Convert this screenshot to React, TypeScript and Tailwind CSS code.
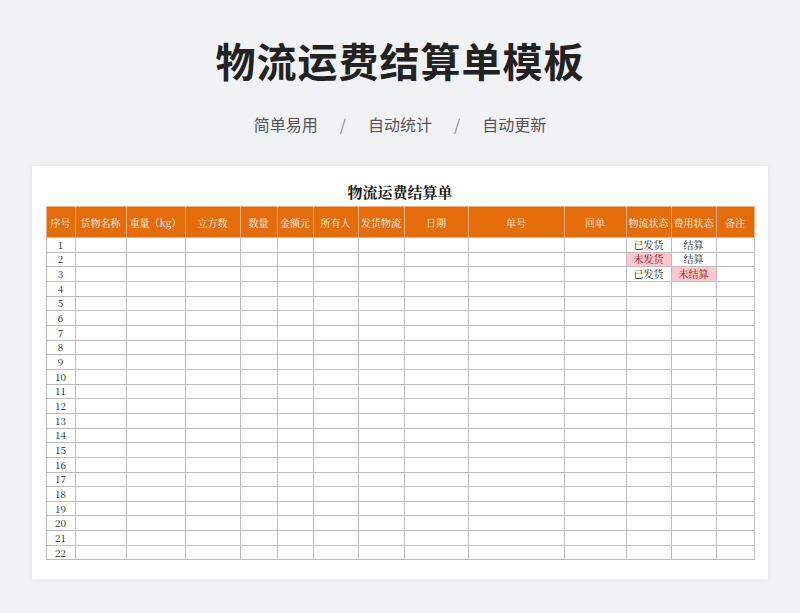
const cols = [
  ["序号", 29], ["货物名称", 51], ["重量（kg）", 59], ["立方数", 55], ["数量", 37], ["金额元", 36],
  ["所有人", 45], ["发货物流", 46], ["日期", 64], ["单号", 96], ["回单", 62], ["物流状态", 45], ["费用状态", 45], ["备注", 38],
] as const;

const status: Record<number, [string, boolean, string, boolean]> = {
  1: ["已发货", false, "结算", false],
  2: ["未发货", true, "结算", false],
  3: ["已发货", false, "未结算", true],
};

export default function App() {
  const rows = Array.from({ length: 22 }, (_, i) => i + 1);
  return (
    <div className="w-[800px] h-[613px] bg-[#f1f2f4] flex flex-col items-center" style={{ fontFamily: '"Noto Sans CJK SC", sans-serif' }}>
      <h1 className="mt-[34px] text-[40px] leading-[52px] font-bold text-[#222] tracking-[1px]">物流运费结算单模板</h1>
      <p className="mt-[26px] text-[16px] leading-[24px] text-[#555] flex gap-[22px]">
        <span>简单易用</span><span className="text-[#888]">/</span><span>自动统计</span><span className="text-[#888]">/</span><span>自动更新</span>
      </p>
      <div className="mt-[30px] w-[736px] h-[413px] bg-white shadow-[0_0_6px_rgba(0,0,0,0.08)] flex flex-col items-center" style={{ fontFamily: '"Noto Serif CJK SC", "Noto Sans CJK SC", serif' }}>
        <div className="mt-[14px] h-[26px] text-[15px] font-bold text-[#111] leading-[24px]">物流运费结算单</div>
        <table className="table-fixed border-collapse text-[10px] text-[#222] w-[708px]">
          <colgroup>{cols.map(([n, w]) => <col key={n} style={{ width: w }} />)}</colgroup>
          <thead>
            <tr className="h-[31px] bg-[#e46c0a] text-white">
              {cols.map(([n]) => (
                <th key={n} className="font-normal border border-[#f4b183] whitespace-nowrap overflow-hidden text-center">{n}</th>
              ))}
            </tr>
          </thead>
          <tbody>
            {rows.map((r) => {
              const s = status[r];
              return (
                <tr key={r} className="h-[14.67px] leading-[12px]">
                  {cols.map(([n], ci) => {
                    let txt = "";
                    let pink = false;
                    if (ci === 0) txt = String(r);
                    if (s && ci === 11) { txt = s[0]; pink = s[1]; }
                    if (s && ci === 12) { txt = s[2]; pink = s[3]; }
                    return (
                      <td key={n} className={`border border-[#bdbdbd] text-center p-0 ${pink ? "bg-[#ffc7ce] text-[#9c0006]" : ""}`}>{txt}</td>
                    );
                  })}
                </tr>
              );
            })}
          </tbody>
        </table>
      </div>
    </div>
  );
}
